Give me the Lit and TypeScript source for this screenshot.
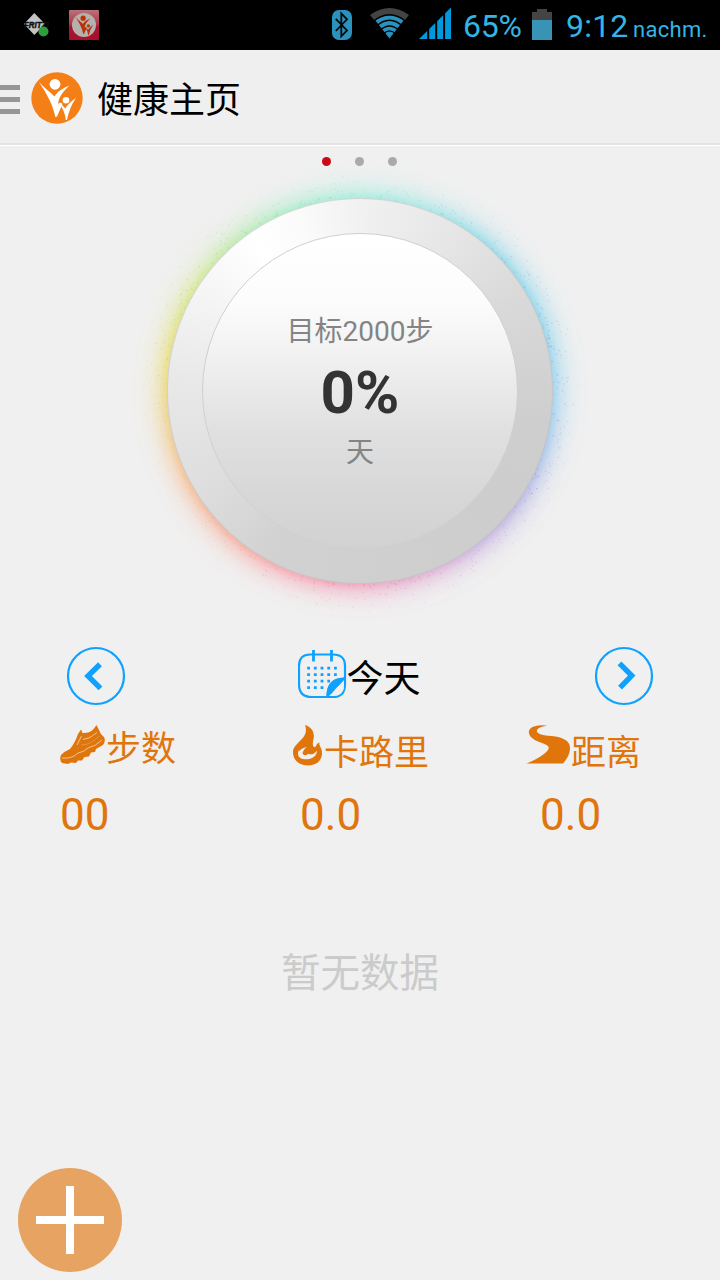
import { LitElement, html, svg, css } from "lit";
import { customElement } from "lit/decorators.js";

const person = svg`
  <circle cx="24" cy="12.3" r="5.4"/>
  <path d="M8 10 C13 16 19 19.5 23.5 24.5 C27 19 32 16 38.5 13.5 C32 19.5 27.5 25 27.2 32 Q29.5 29.5 31.5 32 L26 44.5 L24.3 45 C22 33 16 22 8 10Z"/>
  <circle cx="35" cy="28.2" r="3.3"/>
  <path d="M28 31 Q32 33 34.3 36.5 Q38 30.5 45 26 Q38.5 35 36 48 L34.8 48 Q34 39 28 31Z"/>`;

@customElement("status-bar")
class StatusBar extends LitElement {
  static styles = css`
    :host { display: flex; height: 50px; background: #000; color: #33b5e5; align-items: center;
      font-family: Roboto, sans-serif; box-sizing: border-box; }
    svg { display: block; flex: none; }
    .fritz { margin-left: 22px; }
    .app { margin-left: 17px; }
    .bt { margin-left: 233px; }
    .wifi { margin-left: 18px; }
    .signal { margin-left: 10px; }
    .pct { font-size: 32px; line-height: 50px; margin-left: 12px; width: 60px; padding-top: 2px; letter-spacing: -.2px; }
    .bat { margin-left: 9px; }
    .time { font-size: 32px; line-height: 50px; margin-left: 14px; width: 62px; padding-top: 2px; letter-spacing: .2px; }
    .ampm { font-size: 22px; line-height: 50px; margin-left: 5px; padding-top: 9px; letter-spacing: .3px; white-space: nowrap; }
  `;
  render() {
    return html`
      <svg class="fritz" width="30" height="50" viewBox="0 0 30 50">
        <path d="M12.3 13 L23 24 L12.3 35 L2 24Z" fill="#c4c4c4"/>
        <text x="2" y="27.8" font-family="Liberation Sans" font-weight="bold" font-style="italic" font-size="9" fill="#101010" stroke="#101010" stroke-width=".5" textLength="25" lengthAdjust="spacingAndGlyphs">FRITZ!</text>
        <circle cx="21.5" cy="31.5" r="5" fill="#2f9e3f"/>
      </svg>
      <svg class="app" width="30" height="50" viewBox="0 0 30 50">
        <defs><linearGradient id="r" x1="0" y1="0" x2="0" y2="1"><stop offset="0" stop-color="#b97278"/><stop offset=".5" stop-color="#ac3347"/><stop offset=".55" stop-color="#a61634"/><stop offset="1" stop-color="#a80f2c"/></linearGradient></defs>
        <rect y="10" width="30" height="30" rx="1" fill="url(#r)"/>
        <circle cx="15" cy="25" r="12" fill="#b5b1ae"/>
        <g fill="#b83208" transform="translate(2.6 12.3) scale(.48)">${person}</g>
      </svg>
      <svg class="bt" width="20" height="50" viewBox="0 0 20 50">
        <rect y="10" width="20" height="30" rx="7" fill="#2b91bd"/>
        <path d="M3.8 18.8 L15 30.5 L9.3 36.3 V13.5 L15 19.3 L3.8 31" fill="none" stroke="#05090b" stroke-width="1.8"/>
      </svg>
      <svg class="wifi" width="39" height="50" viewBox="0 0 39 50">
        <path d="M0 15 Q19.5 1 39 15 L34.5 20.5 Q19.5 10 4.5 20.5Z" fill="#444"/>
        <path d="M5 20 Q19.5 10.5 34 20 L19.5 38.5Z" fill="#2b91bd"/>
        <g fill="none" stroke="#000" stroke-width="1.4"><path d="M3 21.5 Q19.5 8 36 21.5"/><path d="M6 26.5 Q19.5 14 33 26.5"/><path d="M10 30.3 Q19.5 21.5 29 30.3"/><path d="M13 34.3 Q19.5 27.5 26 34.3"/></g>
      </svg>
      <svg class="signal" width="32" height="50" viewBox="0 0 32 50">
        <path d="M0 39 L32 7.5 V39Z" fill="#0099dc"/>
        <path d="M9.2 10 V40 M17.2 10 V40 M25.1 8 V40" stroke="#000" stroke-width="2"/>
      </svg>
      <span class="pct">65%</span>
      <svg class="bat" width="20" height="50" viewBox="0 0 20 50">
        <path d="M0 20 V12 H5 V9 H15 V12 H20 V20Z" fill="#444"/><rect y="20" width="20" height="20" fill="#3993b7"/>
      </svg>
      <span class="time">9:12</span><span class="ampm">nachm.</span>`;
  }
}

@customElement("goal-dial")
class GoalDial extends LitElement {
  static styles = css`
    :host { display: grid; width: 480px; height: 480px; }
    .glow, .dust, .ring { grid-area: 1 / 1; }
    .glow { border-radius: 50%; opacity: .8;
      background: conic-gradient(#8eecd8, #8fe4e2 20deg, #75d3e8 40deg, #73cfea 65deg, #83cdf0 90deg, #8fb8ea 108deg, #a9a4df 125deg, #b9a0dd 140deg, #d89bcd 157deg, #f08db2 180deg, #f98c9b 203deg, #f99a83 222deg, #f8ac78 242deg, #f1c765 262deg, #e9d955 280deg, #cfe571 302deg, #a5e9a0 325deg, #91ecc5 342deg, #8eecd8);
      -webkit-mask-image: radial-gradient(circle, #000 190px, rgba(0,0,0,.84) 193px, rgba(0,0,0,.42) 201px, rgba(0,0,0,.14) 211px, rgba(0,0,0,.03) 221px, transparent 231px);
      mask-image: radial-gradient(circle, #000 190px, rgba(0,0,0,.84) 193px, rgba(0,0,0,.42) 201px, rgba(0,0,0,.14) 211px, rgba(0,0,0,.03) 221px, transparent 231px); }
    .dust { z-index: 1; }
    .ring { z-index: 2; place-self: center; display: grid; place-items: center; width: 386px; height: 386px; border-radius: 50%; box-sizing: border-box; border: 1px solid rgba(190,190,190,.55);
      background: conic-gradient(#f1f1f1, #e6e6e6 30deg, #d9d9d9 60deg, #cecece 100deg, #cdcdcd 130deg, #d0d0d0 190deg, #d2d2d2 210deg, #dedede 240deg, #e9e9e9 275deg, #f4f4f4 300deg, #fff 325deg, #fbfbfb 340deg, #f1f1f1) border-box; }
    .face { display: flex; flex-direction: column; align-items: center; width: 316px; height: 316px; border-radius: 50%; box-sizing: border-box; border: 1px solid #d0d0d0;
      background: linear-gradient(#fff, #fcfcfc 22%, #f0f0f0 40%, #e0e0e0 63%, #d6d6d6 86%, #d2d2d2); font-family: Roboto, "Noto Sans CJK SC", sans-serif; }
    .goal { margin-top: 78px; font-size: 28px; line-height: 40px; color: #848484; white-space: nowrap; }
    .value { margin-top: 6px; font-size: 60px; line-height: 70px; font-weight: 700; color: #333; }
    .unit { margin-top: 5px; font-size: 28px; line-height: 40px; color: #848484; }
  `;
  render() {
    let seed = 77;
    const rnd = () => (seed = (seed * 16807) % 2147483647) / 2147483647;
    const dots = Array.from({ length: 750 }, () => {
      const a = rnd() * Math.PI * 2;
      const r = 194 + Math.pow(rnd(), 1.5) * 28;
      const hue = (170 + (a * 180) / Math.PI) % 360;
      return svg`<circle cx=${(240 + r * Math.sin(a)).toFixed(1)} cy=${(240 - r * Math.cos(a)).toFixed(1)} r=${(0.4 + rnd() * 0.4).toFixed(2)} fill=${`hsl(${hue.toFixed(0)} 50% 65%)`} opacity=${((0.4 * (232 - r)) / 38).toFixed(2)} />`;
    });
    return html`
      <div class="glow"></div>
      <svg class="dust" width="480" height="480" viewBox="0 0 480 480">${dots}</svg>
      <div class="ring"><div class="face">
        <div class="goal">目标2000步</div><div class="value">0%</div><div class="unit">天</div>
      </div></div>`;
  }
}

@customElement("app-root")
class AppRoot extends LitElement {
  static styles = css`
    :host { display: flex; flex-direction: column; width: 720px; height: 1280px; overflow: hidden; background: #f0f0f0; color: #000;
      font-family: Roboto, "Noto Sans CJK SC", sans-serif; }
    svg { display: block; flex: none; }
    .header { flex: none; display: flex; align-items: center; height: 96px; box-sizing: border-box; border-bottom: 1px solid #fff; box-shadow: inset 0 -2px #e3e3e3; background: #efefef; }
    .logo { margin-left: 11px; }
    .title { margin-left: 14px; font-size: 36px; line-height: 50px; padding-top: 6px; }
    .pager { flex: none; display: flex; justify-content: center; gap: 24px; height: 9px; margin: 11px 2px 0 0; }
    .dot { width: 9px; height: 9px; border-radius: 50%; background: #aaa; }
    .on { background: #cc0a14; }
    .dial { flex: none; align-self: center; margin-top: -15px; }
    .days { flex: none; display: flex; justify-content: space-between; align-items: center; padding: 0 66px; height: 60px; margin-top: 15px; }
    .today { display: flex; align-items: center; font-size: 37px; line-height: 50px; margin-left: -2px; }
    .today svg { margin-bottom: 4px; }
    .today span { padding-top: 8px; }
    .stats { flex: none; display: grid; grid-template-columns: 233px 233px 1fr; padding-left: 60px; margin-top: 18px; height: 120px; color: #e0750c; }
    .label { display: flex; font-size: 35px; line-height: 50px; height: 50px; }
    .label svg { margin-top: 1px; }
    .label span { padding-top: 1px; }
    .low span { padding: 5px 0 0 1px; }
    .num { font-size: 44px; line-height: 56px; margin-top: 13px; letter-spacing: .1px; }
    .kcal { margin-left: 7px; } .km { margin-left: 14px; }
    .empty { flex: none; margin-top: 100px; text-align: center; font-size: 39.5px; line-height: 60px; color: #cbcbcb; }
    .add { margin: auto 0 8px 18px; }
  `;
  render() {
    return html`
      <status-bar></status-bar>
      <div class="header">
        <svg width="20" height="32" viewBox="0 0 20 32"><path d="M0 5.5H20M0 17.5H20M0 29.5H20" stroke="#969696" stroke-width="5"/></svg>
        <svg class="logo" width="52" height="52" viewBox="0 0 52 52"><circle cx="26" cy="26" r="25.7" fill="#f47f16"/><g fill="#fff">${person}</g></svg>
        <div class="title">健康主页</div>
      </div>
      <div class="pager"><i class="dot on"></i><i class="dot"></i><i class="dot"></i></div>
      <goal-dial class="dial"></goal-dial>
      <div class="days">
        <svg width="60" height="60" viewBox="0 0 60 60" fill="none" stroke="#0da2ff"><circle cx="30" cy="30" r="28" stroke-width="2.2"/><path d="M34 18.3 L22 30 L34.5 42.3" stroke-width="5.4"/></svg>
        <div class="today">
          <svg width="49" height="50" viewBox="0 0 49 50" fill="none" stroke="#0da2ff">
            <path d="M29 48H14C5 48 1 44 1 35V17C1 9 5 5.5 12 5.5H35C43 5.5 47 9 47 17V35C47 44 43 48 35 48Z" stroke-width="2.2"/>
            <path d="M15.5 1V12.5M33.5 1V12.5" stroke-width="2.8"/>
            <path d="M9.2 19.2H39M9.2 25.7H39M9.2 32.2H32M9.2 38.7H26" stroke-width="2.8" stroke-dasharray="2.8 3.9"/>
            <path d="M28.5 48C28.5 36 33 29 47 28.5V30C40 33 37 43 30 48Z" fill="#0da2ff" stroke="none"/>
            <path d="M31 46.5C38 43 42 36 45.8 31V40Q44 45.5 38 46.8Z" fill="#f0f0f0" stroke="none"/>
            <path d="M29 46.5C34 43 40 38 46 31V28.5C33 29 28.5 36 28.5 48Z" fill="#0da2ff" stroke="none"/>
          </svg><span>今天</span>
        </div>
        <svg width="60" height="60" viewBox="0 0 60 60" fill="none" stroke="#0da2ff"><circle cx="30" cy="30" r="28" stroke-width="2.2"/><path d="M25.5 17.3 L37.7 29.6 L26 41.7" stroke-width="5.4"/></svg>
      </div>
      <div class="stats">
        <div>
          <div class="label">
            <svg width="46" height="40" viewBox="0 0 46 40">
              <path d="M21 4.5 L22.5 8 Q30 8.5 34 3.5 L36.5 0 L39 5 Q40 9 44 12 Q46 16 43 20 L36 24 L35 27 L31 27.5 L29 31.5 L24.5 32 L22 35.5 L18 35.5 L16 38 L11 37.5 L8 39 L2 38 Q-1 35 1 30 Q5 26 10 24 Q15 18 18 9Z" fill="#e0750c"/>
              <path d="M21.5 11 L17 20 M23 14.5 Q30 14 37 7.5 M2 33 Q12 34 18 28 Q24 27 28 23 Q36 21 42 15" fill="none" stroke="#f0f0f0" stroke-width=".9" opacity=".7"/>
              <path d="M21 20 Q31 20 39 11" fill="none" stroke="#f0f0f0" stroke-width=".6" opacity=".4"/>
            </svg><span>步数</span>
          </div>
          <div class="num">00</div>
        </div>
        <div>
          <div class="label low">
            <svg width="30" height="41" viewBox="0 0 30 41"><path d="M12 0C19 2 22 8 20.5 14C19.5 18 19.5 22 21.5 22C24 22 22.5 18.5 26.5 17.5C25.5 21 29 22 29 28C29 36 23 40.5 15 40.5C6 40.5 0 35 0 27C0 17 17 14 12 0Z" fill="#e0750c"/><path d="M6 25C3.5 30 6 34 12 34.3C19 34.5 24 31 24 25.5C21 29.5 18 30 15.5 28.8C13 31 10.5 30.5 9.5 28.5C8 28.5 6.5 27 6 25Z" fill="#f0f0f0"/><path d="M14 22Q8 23 6 26.5L9.5 29.5Q9.5 25 14 22Z" fill="#f0f0f0"/></svg><span>卡路里</span>
          </div>
          <div class="num kcal">0.0</div>
        </div>
        <div>
          <div class="label low">
            <svg width="44" height="39" viewBox="0 0 44 39"><path d="M21 .8C12 2 8 6 13 8.5C18 11.5 26 10 34 12.5C41 15 44 18 44 23C44 29 41 34 37 38.5H.5C12 34 19 29 22 25C25 20 18 19 11 16C0 11 0 2 12 .5Q18 -.3 21 .8Z" fill="#e0750c"/></svg><span>距离</span>
          </div>
          <div class="num km">0.0</div>
        </div>
      </div>
      <div class="empty">暂无数据</div>
      <svg class="add" width="104" height="104" viewBox="0 0 104 104"><circle cx="52" cy="52" r="52" fill="#e6a362"/><path d="M18 52H86M52 18V86" stroke="#fff" stroke-width="8"/></svg>`;
  }
}
